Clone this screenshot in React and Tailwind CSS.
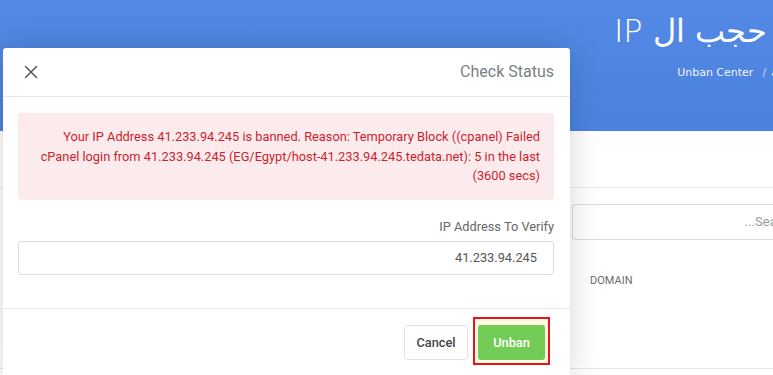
export default function App() {
  return (
    <div className="relative h-[375px] w-[773px] overflow-hidden bg-white font-[Roboto,sans-serif]">
      {/* page header */}
      <header className="h-[131px] bg-linear-to-b from-[#5389e5] to-[#4c83df]">
        <div dir="rtl" className="pr-[6px] pt-[11px] font-['DejaVu_Sans',sans-serif] text-white">
          <h1 className="text-[32px] font-extralight leading-[40px]">حجب ال IP</h1>
          <div className="mr-[-42px] mt-[14px] flex items-center text-[11px] text-white/95">
            <span>الرئيسية</span>
            <span className="px-[5px] text-white/70">/</span>
            <span className="mr-[4px]">Unban Center</span>
          </div>
        </div>
      </header>

      {/* card behind the modal */}
      <div className="h-[57px] border-b border-[#ebebeb]" />
      <div className="pl-[572px] pt-[16px]">
        <div
          dir="rtl"
          className="flex h-[36px] w-[236px] items-center rounded-[3px] border border-[#dcdcdc] pr-[12px] text-[13px] text-[#9a9a9a]"
        >
          Search...
        </div>
      </div>
      <div className="h-[129px] border-b border-[#e6e6e6] pl-[590px] pt-[33px] text-[11px] text-[#6b6b6b]">
        DOMAIN
      </div>

      {/* modal */}
      <div className="absolute left-[3px] top-[48px] w-[567px] rounded-t-[3px] bg-white shadow-[0_0_32px_rgba(0,0,0,0.16)]">
        <div className="flex h-[49px] items-center justify-between border-b border-[#e5e8ec] pl-[21px] pr-[16px]">
          <svg width="14" height="14" viewBox="0 0 14 14" className="text-[#555]">
            <path d="M1.5 1.5 12.5 12.5M12.5 1.5 1.5 12.5" stroke="currentColor" strokeWidth="1.5" strokeLinecap="round" />
          </svg>
          <h5 className="text-[16px] text-[#7a7f85]">Check Status</h5>
        </div>

        <div className="pb-[33px] pl-[15px] pr-[16px] pt-[16px]">
          <div className="rounded-[3px] bg-[#fcebec] px-[14px] py-[14px] text-right text-[12.8px] leading-[19.5px] text-[#cc1f2f]">
            Your IP Address 41.233.94.245 is banned. Reason: Temporary Block ((cpanel) Failed cPanel login from
            41.233.94.245 (EG/Egypt/host-41.233.94.245.tedata.net): 5 in the last (3600 secs)
          </div>
          <label className="mb-[5px] mt-[17px] block text-right text-[12.8px] leading-[19.5px] text-[#666]">
            IP Address To Verify
          </label>
          <div className="flex h-[34px] items-center justify-end rounded-[3px] border border-[#dadde2] pr-[16px] text-[12.8px] text-[#555]">
            41.233.94.245
          </div>
        </div>

        <div className="flex items-start justify-end border-t border-[#e5e8ec] pb-[16px] pr-[20px] pt-[16px]">
          <button className="flex h-[35px] w-[64px] items-center justify-center rounded-[3px] border border-[#e0e3e8] bg-white text-[12.8px] font-medium text-[#444]">
            Cancel
          </button>
          <div className="ml-[5px] mt-[-8px] border-2 border-[#e8141c] bg-[#fdfbe4] pb-[3px] pl-[3px] pr-[3px] pt-[6px]">
            <button className="flex h-[35px] w-[67px] items-center justify-center rounded-[3px] bg-[#72cc56] text-[12.8px] font-medium text-white">
              Unban
            </button>
          </div>
        </div>
      </div>
    </div>
  );
}
